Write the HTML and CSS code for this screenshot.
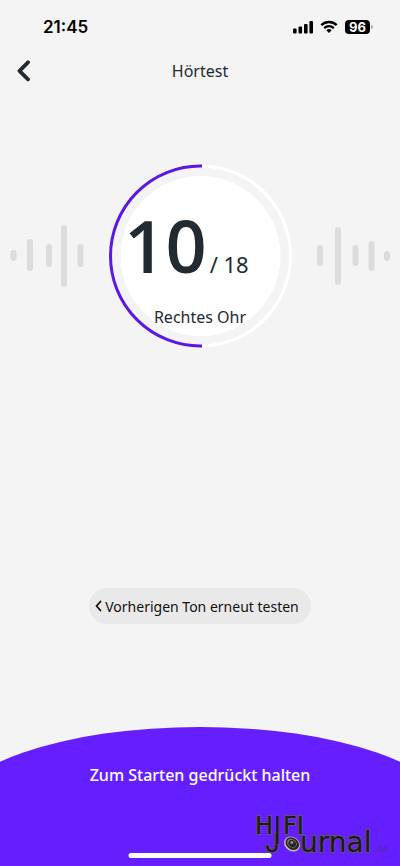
FILE: index.html
```html
<!DOCTYPE html>
<html lang="de">
<head>
<meta charset="utf-8">
<meta name="viewport" content="width=device-width, initial-scale=1">
<title>Hörtest</title>
<link rel="stylesheet" href="styles.css">
</head>
<body>
<div class="screen">
  <div class="status">
    <time class="clock">21:45</time>
    <div class="indicators">
      <svg width="20" height="14" viewBox="0 0 20 14" aria-hidden="true">
        <rect x="0" y="8.500" width="3.6" height="5" rx="1"/>
        <rect x="5.5" y="6.500" width="3.6" height="7" rx="1"/>
        <rect x="11" y="4" width="3.6" height="9.5" rx="1"/>
        <rect x="16.4" y="1" width="3.6" height="12.5" rx="1"/>
      </svg>
      <svg width="18" height="14" viewBox="0 0 18 14" aria-hidden="true">
        <path d="M1.3 5.1 A11.2 11.2 0 0 1 16.7 5.1" fill="none" stroke="#000" stroke-width="2.4"/>
        <path d="M4.2 8.1 A7 7 0 0 1 13.8 8.1" fill="none" stroke="#000" stroke-width="2.3"/>
        <path d="M6.3 10.2 A4 4 0 0 1 11.7 10.2 L9 13 Z"/>
      </svg>
      <div class="battery"><span class="charge">96</span><span class="cap"></span></div>
    </div>
  </div>

  <header class="bar">
    <button class="back" type="button" aria-label="Zurück">
      <svg width="14" height="22" viewBox="0 0 14 22" aria-hidden="true"><path d="M12 2.3 L3.5 10.8 L12 19.3" fill="none" stroke="#222b31" stroke-width="3.8" stroke-linecap="round" stroke-linejoin="round"/></svg>
    </button>
    <h1 class="title">Hörtest</h1>
  </header>

  <main class="main">
    <section class="test">
      <svg class="wave" width="74" height="64" viewBox="0 0 74 64" aria-hidden="true">
        <rect x="0.500" y="26" width="6" height="11" rx="3"/>
        <rect x="17" y="15" width="6" height="32" rx="3"/>
        <rect x="36" y="20" width="6" height="23" rx="3"/>
        <rect x="51" y="1" width="6" height="62" rx="3"/>
        <rect x="67.500" y="20" width="6" height="23" rx="3"/>
      </svg>
      <div class="dial">
        <svg class="ring" viewBox="0 0 184 184" aria-hidden="true">
          <circle cx="92.500" cy="92" r="80" fill="#fff"/>
          <circle cx="92.500" cy="92" r="90" fill="none" stroke="#fff" stroke-width="3"/>
          <path d="M94 182 H92.500 A90 90 0 0 1 92.500 2 H94" fill="none" stroke="#5a17e6" stroke-width="3"/>
        </svg>
        <p class="count"><strong class="current">10</strong><span class="total">/ 18</span></p>
        <p class="ear">Rechtes Ohr</p>
      </div>
      <svg class="wave" width="74" height="64" viewBox="0 0 74 64" aria-hidden="true">
        <rect x="1" y="21" width="6" height="21" rx="3"/>
        <rect x="19" y="3" width="6" height="58" rx="3"/>
        <rect x="36.500" y="21" width="6" height="21" rx="3"/>
        <rect x="52.5" y="17" width="6" height="30" rx="3"/>
        <rect x="68" y="27" width="6" height="10" rx="3"/>
      </svg>
    </section>
    <button class="retry" type="button">
      <svg width="7" height="12" viewBox="0 0 7 12" aria-hidden="true"><path d="M5.5 1.500 L1.5 6 L5.5 10.500" fill="none" stroke="#111" stroke-width="1.8" stroke-linecap="round" stroke-linejoin="round"/></svg>
      Vorherigen Ton erneut testen
    </button>
  </main>

  <footer class="footer">
    <button class="start" type="button">Zum Starten gedrückt halten</button>
    <div class="home"></div>
    <svg class="logo" width="140" height="56" viewBox="0 -10 140 56" role="img" aria-label="HIFI Journal.de">
      <g class="mark">
        <text class="top" x="0" y="20">H</text>
        <text class="top" x="28" y="20">FI</text>
        <text class="initial" x="10" y="38">J</text>
        <text class="name" x="45" y="38">urnal</text>
        <text class="tld" x="119" y="38">.de</text>
        <rect class="stem" x="21" y="2" width="2.500" height="28"/>
      </g>
      <g transform="rotate(38 37 30)">
        <ellipse cx="37" cy="30" rx="8.500" ry="7" fill="#c9c0a4"/>
        <ellipse cx="37" cy="29.500" rx="7.300" ry="5.800" fill="#29272a"/>
        <ellipse cx="36.500" cy="29.500" rx="5.300" ry="4.200" fill="#77736f"/>
        <ellipse cx="37" cy="29.500" rx="4" ry="3.200" fill="#242126"/>
        <circle cx="36" cy="29" r="1.600" fill="#8b8781"/>
      </g>
    </svg>
  </footer>
</div>
</body>
</html>
```
FILE: styles.css
```css
* {
  box-sizing: border-box;
}

body {
  margin: 0;
  background: #f4f4f4;
  color: #222b31;
  font-family: "Noto Sans", "Open Sans", sans-serif;
}

h1,
p {
  margin: 0;
}

button {
  border: 0;
  padding: 0;
  background: none;
  color: inherit;
  font: inherit;
  cursor: pointer;
}

svg {
  display: block;
}

.screen {
  display: flex;
  flex-direction: column;
  min-height: 100vh;
}

.status {
  display: flex;
  align-items: center;
  justify-content: space-between;
  height: 54px;
  padding: 0 27px 0 43px;
  color: #000;
  font-family: Inter, sans-serif;
}

.clock {
  font-size: 17px;
  font-weight: 600;
}

.indicators {
  display: flex;
  align-items: center;
  gap: 7px;
}

.battery {
  display: flex;
  align-items: center;
  gap: 1px;
}

.charge {
  width: 25px;
  border-radius: 4px;
  background: #000;
  color: #fff;
  font-size: 13px;
  font-weight: 700;
  line-height: 14px;
  text-align: center;
}

.cap {
  width: 2px;
  height: 4px;
  border-radius: 0 2px 2px 0;
  background: #aaa;
}

.bar {
  display: grid;
  grid-template-columns: 32px 1fr 32px;
  align-items: center;
  height: 34px;
  padding: 0 16px;
}

.title {
  font-size: 16px;
  font-weight: 400;
  text-align: center;
}

.main {
  display: flex;
  flex: 1;
  flex-direction: column;
  align-items: center;
  justify-content: space-between;
  padding: 76px 0 103px;
}

.test {
  display: flex;
  align-items: center;
  justify-content: space-between;
  width: 100%;
  padding: 0 10px;
}

.wave {
  fill: #dcdcdc;
}

.dial {
  display: grid;
  justify-items: center;
  width: 184px;
  height: 184px;
}

.ring,
.count,
.ear {
  grid-area: 1 / 1;
}

.ring {
  width: 100%;
}

.count {
  display: flex;
  align-items: baseline;
  gap: 3px;
  margin-top: 45px;
  padding-right: 27px;
  line-height: 72px;
}

.current {
  font-family: "Open Sans", sans-serif;
  font-size: 72px;
  font-weight: 600;
}

.total {
  font-size: 22px;
}

.ear {
  align-self: end;
  padding-bottom: 19px;
  font-size: 16px;
  line-height: 24px;
}

.retry {
  display: flex;
  align-items: center;
  gap: 3px;
  height: 36px;
  padding: 0 12px 0 6px;
  border-radius: 18px;
  background: #e9e9e9;
  color: #111;
  font-size: 14px;
}

.footer {
  position: relative;
  overflow: hidden;
}

.start {
  display: block;
  width: 125%;
  height: 139px;
  margin: 0 -12.5%;
  padding-bottom: 43px;
  border-radius: 50% 50% 0 0 / 87px 87px 0 0;
  background: #651fff;
  color: #fff;
  font-size: 16px;
  font-weight: 500;
}

.home {
  position: absolute;
  bottom: 8px;
  left: 50%;
  width: 143px;
  height: 5px;
  border-radius: 3px;
  background: #fff;
  transform: translateX(-50%);
}

.logo {
  position: absolute;
  right: 5px;
  bottom: 6px;
}

.mark {
  fill: #1e1822;
  stroke: #62506c;
  stroke-width: 2px;
  paint-order: stroke;
  font-family: "DejaVu Sans", sans-serif;
}

.stem {
  stroke-width: 1px;
}

.top {
  font-size: 24px;
}

.initial {
  font-family: Inter, sans-serif;
  font-size: 26px;
}

.name {
  font-size: 28px;
}

.tld {
  fill: #4a2f93;
  stroke: none;
  font-size: 9px;
}
```
